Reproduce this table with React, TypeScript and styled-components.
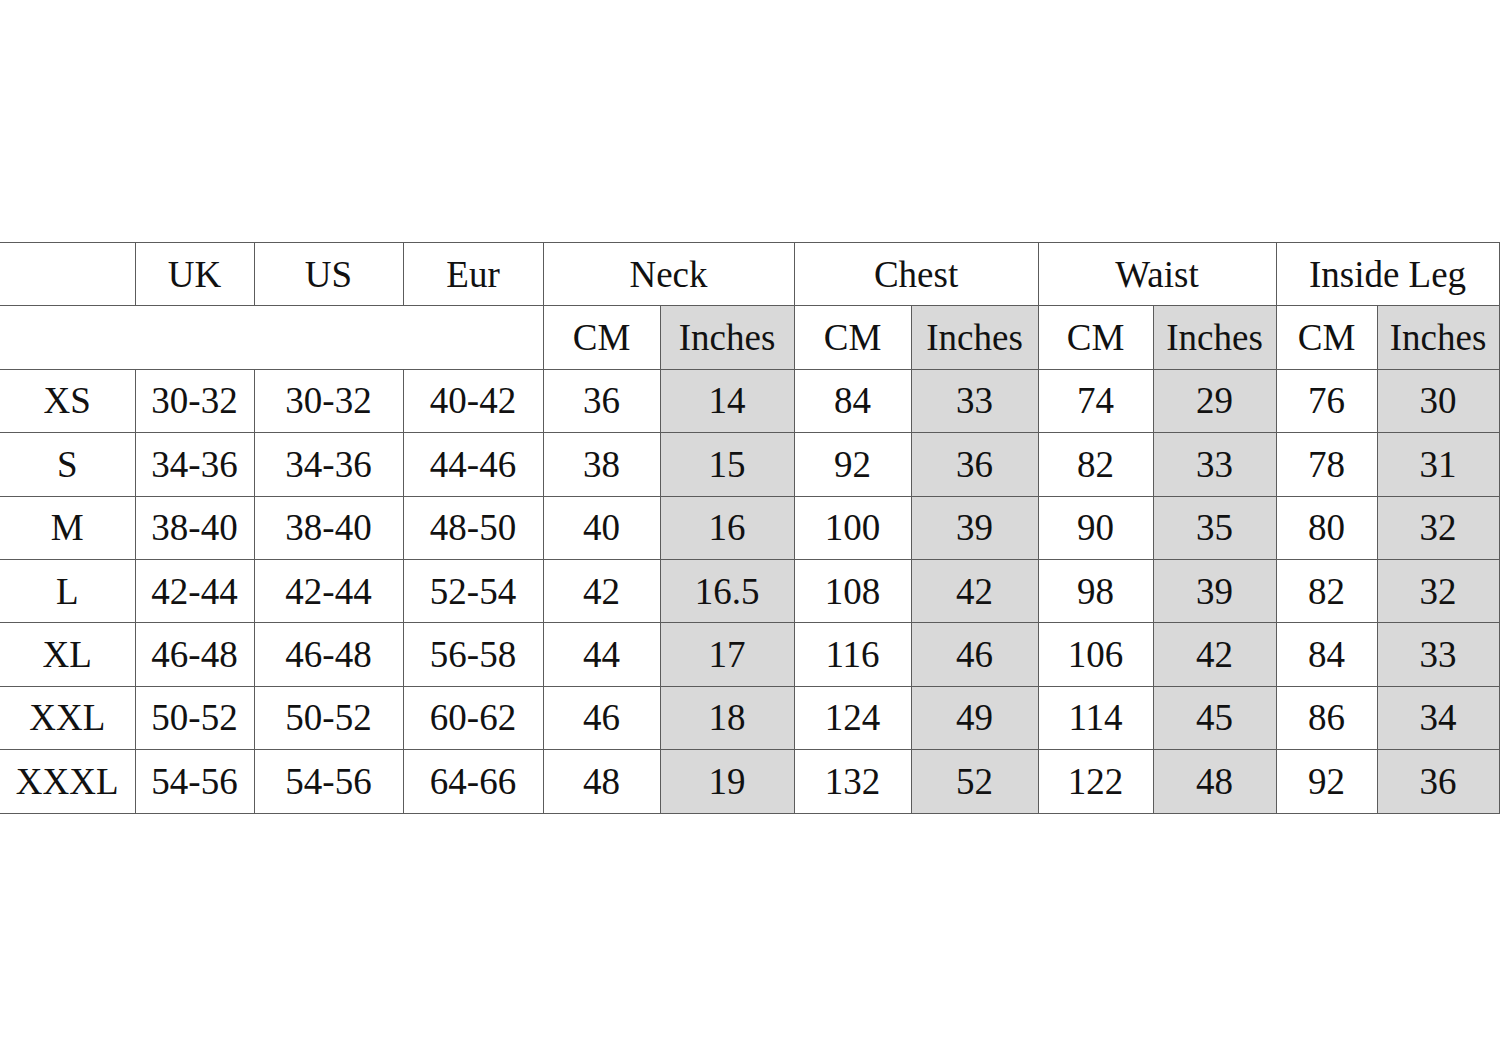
import styled, { createGlobalStyle } from "styled-components";

const GlobalStyle = createGlobalStyle`
  html, body {
    margin: 0;
    background: #ffffff;
  }
`;

const widths = [135, 119, 149, 140, 117, 134, 117, 127, 115, 123, 101, 122];

const groups = ["Neck", "Chest", "Waist", "Inside Leg"];

const rows = [
  ["XS", "30-32", "30-32", "40-42", "36", "14", "84", "33", "74", "29", "76", "30"],
  ["S", "34-36", "34-36", "44-46", "38", "15", "92", "36", "82", "33", "78", "31"],
  ["M", "38-40", "38-40", "48-50", "40", "16", "100", "39", "90", "35", "80", "32"],
  ["L", "42-44", "42-44", "52-54", "42", "16.5", "108", "42", "98", "39", "82", "32"],
  ["XL", "46-48", "46-48", "56-58", "44", "17", "116", "46", "106", "42", "84", "33"],
  ["XXL", "50-52", "50-52", "60-62", "46", "18", "124", "49", "114", "45", "86", "34"],
  ["XXXL", "54-56", "54-56", "64-66", "48", "19", "132", "52", "122", "48", "92", "36"],
];

export default function App() {
  return (
    <>
      <GlobalStyle />
      <Page>
        <SizeTable>
          <colgroup>
            {widths.map((w, i) => (
              <col key={i} style={{ width: w }} />
            ))}
          </colgroup>
          <tbody>
            <Row>
              <Cell />
              <Cell>UK</Cell>
              <Cell>US</Cell>
              <Cell>Eur</Cell>
              {groups.map((g) => (
                <Cell key={g} colSpan={2}>
                  {g}
                </Cell>
              ))}
            </Row>
            <Row>
              <Cell colSpan={4} />
              {groups.map((g) => [
                <Cell key={g + "cm"}>CM</Cell>,
                <Cell key={g + "in"} $shaded>
                  Inches
                </Cell>,
              ])}
            </Row>
            {rows.map((r) => (
              <Row key={r[0]}>
                {r.map((v, i) => (
                  <Cell key={i} $shaded={i >= 5 && i % 2 === 1}>
                    {v}
                  </Cell>
                ))}
              </Row>
            ))}
          </tbody>
        </SizeTable>
      </Page>
    </>
  );
}

const Page = styled.div`
  width: 1500px;
  height: 1057px;
  padding-top: 242px;
  box-sizing: border-box;
`;

const SizeTable = styled.table`
  width: 1499px;
  table-layout: fixed;
  border-collapse: collapse;
  font-family: "Liberation Serif", "Times New Roman", serif;
  font-size: 37px;
  color: #111111;
`;

const Row = styled.tr`
  height: 63.4px;
`;

const Cell = styled.td<{ $shaded?: boolean }>`
  border: 1.5px solid #5c5c5c;
  padding: 0;
  text-align: center;
  vertical-align: middle;
  white-space: nowrap;
  line-height: 1;
  background: ${(p) => (p.$shaded ? "#d9d9d9" : "#ffffff")};

  &:first-child {
    border-left: none;
  }
`;
